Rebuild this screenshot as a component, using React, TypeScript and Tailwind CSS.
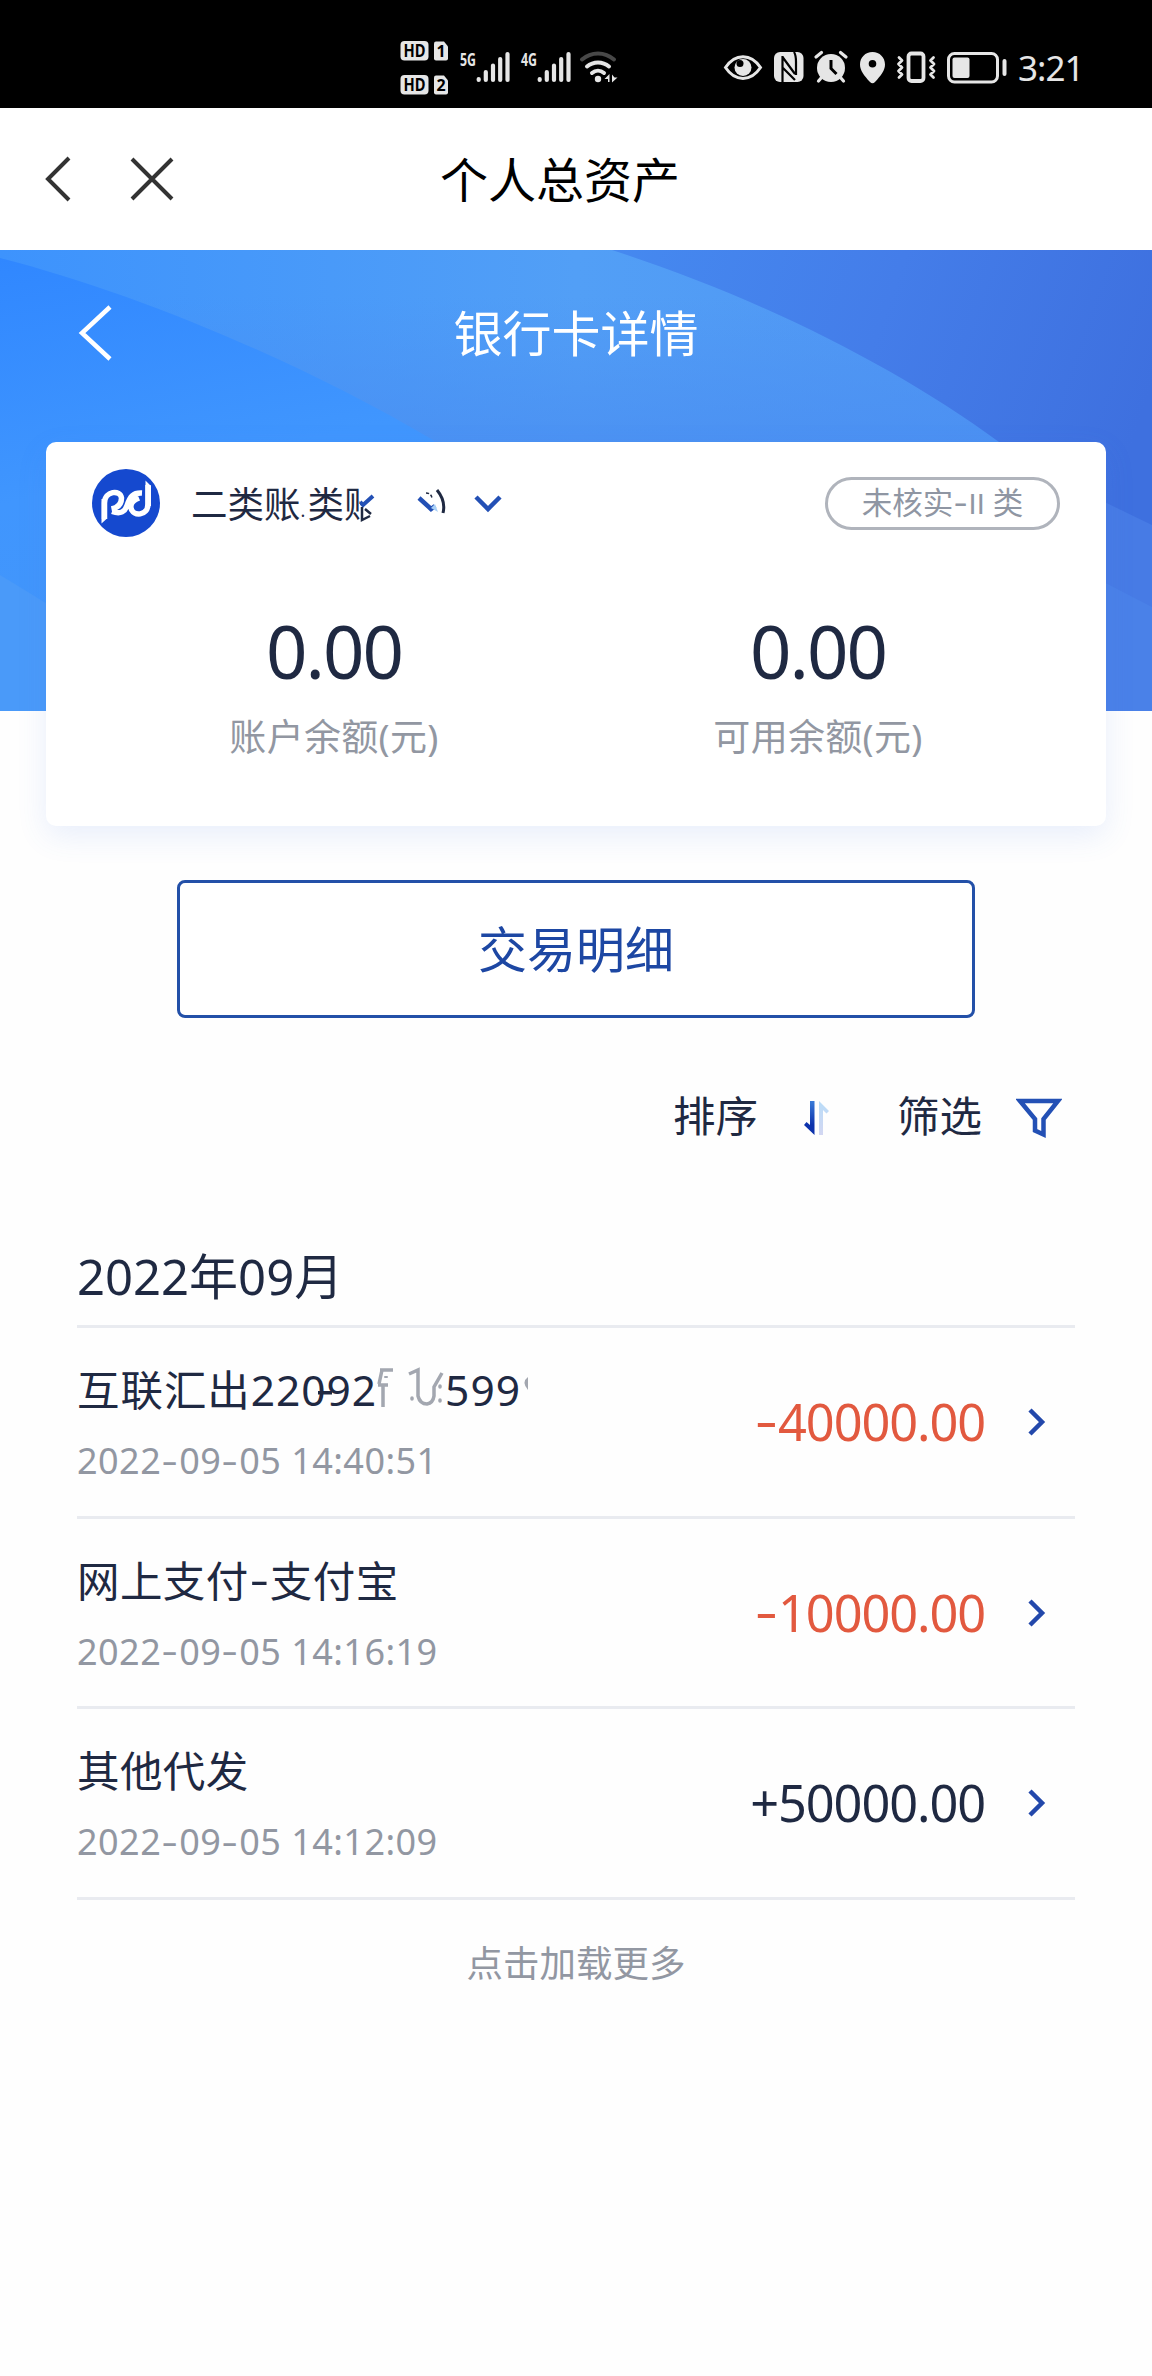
import type { ReactNode } from "react";

const records = [
  { title: "互联汇出22092", time: "2022-09-05 14:40:51", amount: "-40000.00", smudged: true },
  { title: "网上支付-支付宝", time: "2022-09-05 14:16:19", amount: "-10000.00" },
  { title: "其他代发", time: "2022-09-05 14:12:09", amount: "+50000.00" },
];

const balances = [
  { label: "账户余额(元)", value: "0.00" },
  { label: "可用余额(元)", value: "0.00" },
];

// hyphens sit wider and higher than the font's own
function Dashed({ text }: { text: string }) {
  return (
    <>
      {text.split("-").map((part, i) => (
        <span key={i}>
          {i > 0 && (
            <span className="relative -top-[0.03em] inline-block w-[0.5em] scale-x-140 text-center">-</span>
          )}
          {part}
        </span>
      ))}
    </>
  );
}

function Signal({ x, label }: { x: number; label: string }) {
  return (
    <g transform={`translate(${x} 0)`}>
      <text x="0" y="65.5" fontSize="18" fontWeight="700" textLength="16" lengthAdjust="spacingAndGlyphs" fill="#e6e6e6">
        {label}
      </text>
      <path
        d="M18.7 79v1M25.8 72v8M33 65.500v14.500M40.200 59v21M47.500 54v26"
        stroke="#e6e6e6"
        strokeWidth="4.200"
        strokeLinecap="round"
      />
    </g>
  );
}

function SimTag({ y, slot }: { y: number; slot: string }) {
  return (
    <g transform={`translate(0 ${y})`}>
      <rect x="400.500" y="0" width="28" height="19.500" rx="4" fill="#e6e6e6" />
      <text x="403.500" y="15.800" fontSize="17" fontWeight="700" textLength="22" lengthAdjust="spacingAndGlyphs" fill="#000">
        HD
      </text>
      <path d="M436 .5h8l4 5v12a2 2 0 0 1-2 2h-10a2 2 0 0 1-2-2v-15a2 2 0 0 1 2-2z" fill="#e6e6e6" />
      <text x="441" y="16" fontSize="16" fontWeight="700" textAnchor="middle" fill="#000">
        {slot}
      </text>
    </g>
  );
}

function StatusBar() {
  return (
    <div className="flex h-[108px] items-start bg-black pt-[30px] pl-[396px] text-[#e6e6e6]">
      <svg width="230" height="76" viewBox="396 30 230 76" fill="none">
        <SimTag y={41} slot="1" />
        <SimTag y={75} slot="2" />
        <Signal x={460} label="5G" />
        <Signal x={521} label="4G" />
        <g strokeLinecap="round" strokeWidth="4">
          <path d="M582 59.500a24 24 0 0 1 32 0" stroke="#484848" />
          <path d="M587 66.500a17 17 0 0 1 22 0" stroke="#e6e6e6" />
          <path d="M592 73a9.500 9.500 0 0 1 12 0" stroke="#e6e6e6" />
        </g>
        <circle cx="598" cy="79" r="3.200" fill="#e6e6e6" />
        <path d="M604.500 79l5-5v8h-1.500v-3zM612 74.500v8l5.500-5h-3z" fill="#e6e6e6" />
      </svg>
      <svg className="ml-[94px]" width="290" height="76" viewBox="720 30 290 76" fill="none">
        <path d="M725.500 67.500c9.500-14.500 25.500-14.500 35 0c-9.500 14.500-25.500 14.500-35 0z" stroke="#e6e6e6" strokeWidth="3" />
        <circle cx="743" cy="67.500" r="8.500" fill="#e6e6e6" />
        <circle cx="740" cy="63.500" r="3.500" fill="#000" />
        <rect x="774" y="52" width="29.500" height="30" rx="6" fill="#e6e6e6" />
        <path d="M782.500 83V56M782.500 57l12.500 17M794 52q2 3 2 10v13M783 68l12 12" stroke="#000" strokeWidth="2.200" />
        <circle cx="831" cy="68" r="14" fill="#e6e6e6" />
        <path d="M816 57l5.500-4.500M846 57l-5.500-4.500M822 77l-3.500 4M840 77l3.500 4" stroke="#e6e6e6" strokeWidth="3.200" strokeLinecap="round" />
        <path d="M831 60v8.500l5.500 5.500" stroke="#000" strokeWidth="3" />
        <path
          fillRule="evenodd"
          d="M872.500 52c7.200 0 12.500 5.500 12.500 12.500c0 6-4 11-10 17.500q-2.500 2.500-5 0c-6-6.500-10-11.500-10-17.500c0-7 5.300-12.500 12.500-12.500zm0 8a3.800 3.800 0 1 0 0 7.600a3.800 3.800 0 0 0 0-7.600z"
          fill="#e6e6e6"
        />
        <rect x="908.500" y="53.500" width="15" height="27.500" rx="3" stroke="#e6e6e6" strokeWidth="3.800" />
        <path
          d="M899 57.500l3 3-3.500 3.500 3.500 3.500-3.500 3.500 3.500 3.500-3 3M933.500 57.500l-3 3 3.500 3.500-3.500 3.500 3.500 3.500-3.500 3.500 3 3"
          stroke="#e6e6e6"
          strokeWidth="2.800"
          strokeLinecap="round"
          strokeLinejoin="round"
        />
        <rect x="948.500" y="53.500" width="49" height="28.500" rx="6" stroke="#e6e6e6" strokeWidth="3" />
        <rect x="952.500" y="57.500" width="17" height="20.500" rx="2" fill="#e6e6e6" />
        <rect x="1002.500" y="59" width="4" height="17" rx="2" fill="#e6e6e6" />
      </svg>
      <span className="mt-[14px] ml-[8px] text-[35px] leading-[48px] tracking-[-1px]">3:21</span>
    </div>
  );
}

function NavBar() {
  return (
    <div className="grid h-[142px] grid-cols-[432px_256px_1fr] items-center bg-white">
      <div className="flex pl-[42px] text-[#333]">
        <svg width="32" height="48" viewBox="0 0 32 48" fill="none" stroke="currentColor" strokeWidth="4">
          <path d="M27 3L6 24l21 21" />
        </svg>
        <svg className="ml-[54px]" width="48" height="48" viewBox="0 0 48 48" fill="none" stroke="currentColor" strokeWidth="4">
          <path d="M4 4l40 40M44 4L4 44" />
        </svg>
      </div>
      <h1 className="pt-[1px] text-center text-[48px] leading-none text-black">个人总资产</h1>
    </div>
  );
}

function HeroBackdrop() {
  return (
    <svg className="absolute inset-0" width="1152" height="461" viewBox="0 0 1152 461" preserveAspectRatio="none">
      <defs>
        <linearGradient id="base" x1="0" y1="0" x2="1" y2="0">
          <stop offset="0" stopColor="#3d93fd" />
          <stop offset="0.500" stopColor="#529ff6" />
          <stop offset="1" stopColor="#5092f2" />
        </linearGradient>
        <linearGradient id="lower" x1="0" y1="0" x2="0" y2="1">
          <stop offset="0.100" stopColor="#4a8ff2" stopOpacity="0" />
          <stop offset="0.420" stopColor="#4a8ff2" stopOpacity="0.800" />
        </linearGradient>
        <linearGradient id="left" x1="0" y1="0" x2="0.300" y2="1">
          <stop offset="0" stopColor="#3087ff" />
          <stop offset="0.500" stopColor="#4096fe" />
          <stop offset="1" stopColor="#4395f8" />
        </linearGradient>
        <linearGradient id="right" x1="0" y1="0" x2="1" y2="0.300">
          <stop offset="0" stopColor="#4589f0" />
          <stop offset="0.500" stopColor="#447de9" />
          <stop offset="1" stopColor="#3e70df" />
        </linearGradient>
      </defs>
      <rect width="1152" height="461" fill="url(#base)" />
      <rect width="1152" height="461" fill="url(#lower)" />
      <path d="M0 8C140 44 300 112 433 190L640 461H0z" fill="url(#left)" />
      <path d="M612 0C760 48 895 116 999 192L1106 461H1152V0z" fill="url(#right)" />
      <path d="M1090 245L1152 275V461H1090z" fill="#477be5" />
      <path d="M1090 325L1152 357V461H1090z" fill="#4a81e8" />
      <path d="M0 325Q25 340 60 362V461H0z" fill="#4a9af9" />
    </svg>
  );
}

function Logo() {
  return (
    <svg width="68" height="68" viewBox="0 0 68 68" fill="none">
      <circle cx="34" cy="34" r="34" fill="#1549cf" />
      <path
        d="M12.500 50V34c0-12 16-14 17-5c0 7-5 10-10 11M20 42.500c9 3 13 0 15-6c3-9 6-13 15-12.500M56 16v19c0 12-15 13-17 4c-1-5 3-8 8-10"
        stroke="#fff"
        strokeWidth="5.500"
      />
      <path d="M9.500 30v24.500l5.500-5V30zM53.500 11.500l5.500 5.500v20h-5.500z" fill="#fff" />
    </svg>
  );
}

function Chevron({ className }: { className?: string }) {
  return (
    <svg className={className} width="28" height="20" viewBox="0 0 28 20" fill="none" stroke="#2350b5" strokeWidth="4.500">
      <path d="M2 3l12 12L26 3" />
    </svg>
  );
}

function AccountName() {
  return (
    <div className="ml-[31px] flex items-center pt-[2px] text-[36.500px] leading-[48px] whitespace-nowrap text-[#1f2942]">
      <span>二类账</span>
      <span className="w-[7px] pt-[12px] text-[18px]">.</span>
      <span>类账</span>
      <svg className="relative -ml-[21px]" width="23" height="44" viewBox="0 0 23 44" fill="none">
        <path d="M0 0h23v44H0z" fill="#fff" />
        <path d="M0 20l3 3L13 14" stroke="#2350b5" strokeWidth="4" />
        <path d="M2 25v13l8-4M5 27l6 5" stroke="#1f2942" strokeWidth="2.500" />
      </svg>
      <svg className="ml-[34px]" width="30" height="32" viewBox="0 0 30 32" fill="none">
        <path d="M2 10l12 11 4-3" stroke="#2350b5" strokeWidth="4.500" />
        <path d="M14 20l4-4 3 8z" fill="#a9d0f7" />
        <path d="M9 5q5 0 6 5" stroke="#1f2942" strokeWidth="1.500" strokeDasharray="3 2" />
        <path d="M20 2q9 11 6 23" stroke="#1f2942" strokeWidth="3" />
      </svg>
      <Chevron className="ml-[27px]" />
    </div>
  );
}

function CardPanel() {
  return (
    <div className="mx-[46px] mt-[49px] h-[384px] rounded-[10px] bg-white px-[46px] pt-[27px] shadow-[0_10px_30px_rgba(70,120,230,0.12)]">
      <div className="flex h-[68px] items-center">
        <Logo />
        <AccountName />
        <div className="ml-auto flex h-[53px] w-[235px] items-center justify-center rounded-full border-3 border-[#b0b4bc] text-[30.500px] whitespace-nowrap text-[#8f96a3]">
          <span>
            <Dashed text="未核实-" />
            <span className="font-['Liberation_Sans'] text-[29px]">II</span> 类
          </span>
        </div>
      </div>
      <div className="mt-[66px] grid grid-cols-2 text-center">
        {balances.map((b) => (
          <div key={b.label}>
            <p className="text-[72.500px] leading-[96px] tracking-[-2px] text-[#1f2942]">{b.value}</p>
            <p className="mt-[14px] text-[37px] leading-[48px] tracking-[0.300px] text-[#9297a2]">{b.label}</p>
          </div>
        ))}
      </div>
    </div>
  );
}

function Toolbar() {
  return (
    <div className="mt-[66px] flex h-[64px] items-center pl-[673px] text-[42.500px] text-[#1f2942]">
      <span>排序</span>
      <svg className="mt-[3px] ml-[45px]" width="28" height="36" viewBox="0 0 28 36" fill="none">
        <defs>
          <linearGradient id="down" x1="0" y1="0" x2="0" y2="1">
            <stop offset="0" stopColor="#3a7bd8" />
            <stop offset="0.700" stopColor="#0d32ac" />
          </linearGradient>
          <linearGradient id="up" x1="0" y1="0" x2="0" y2="1">
            <stop offset="0" stopColor="#b9dcf8" />
            <stop offset="1" stopColor="#d3d7f2" />
          </linearGradient>
        </defs>
        <path d="M7 1h4.500v34L1 25l2.500-3L7 25z" fill="url(#down)" />
        <path d="M16 1l10 10-2.500 2.500L20 10v25h-4z" fill="url(#up)" />
      </svg>
      <span className="ml-[66px]">筛选</span>
      <svg className="mt-[3px] ml-[34px]" width="46" height="42" viewBox="0 0 46 42" fill="none">
        <path d="M4 4h38L27.500 22v15.500L19 33.500V22z" stroke="#2350b5" strokeWidth="4.500" />
      </svg>
    </div>
  );
}

// leftovers of the masked card number
function MaskedTail() {
  return (
    <span className="relative flex">
      <svg className="absolute top-[29px] -left-[59px]" width="14" height="4" viewBox="0 0 14 4">
        <path d="M0 0h14v3.500H0z" fill="#1f2942" />
      </svg>
      <svg width="68" height="56" viewBox="0 0 68 56" fill="none" stroke="#a3a7b0" strokeWidth="3.500">
        <path d="M3 8h13M5 8L2 22M9 16v-2M1 23h10M6 24v21" />
        <path d="M32 12l9-4v26q2 8 9 8q6-1 7-8v-9l8-14" />
        <path d="M35 36v1M63 24v1M63 38v1" strokeLinecap="round" />
      </svg>
      <span className="tracking-[1px] text-[#1f2942]">599</span>
      <svg width="8" height="56" viewBox="0 0 8 56" fill="none">
        <path d="M7 15q-7 5 0 13z" fill="#a3a7b0" />
      </svg>
    </span>
  );
}

function Row({ title, time, amount, children }: { title: string; time: string; amount: string; children?: ReactNode }) {
  return (
    <li className="flex h-[190.700px] items-center border-b-3 border-[#e9ebf0]">
      <div>
        <div className="flex h-[56px] items-center text-[42.500px] leading-[56px] whitespace-nowrap text-[#1f2942]">
          <span className={children ? "tracking-[0.950px]" : "tracking-[0.400px]"}>
            <Dashed text={title} />
          </span>
          {children}
        </div>
        <p className="relative top-[3px] mt-[16px] text-[36px] leading-[48px] tracking-[0.450px] whitespace-nowrap text-[#9297a2]">
          <Dashed text={time} />
        </p>
      </div>
      <span className={`ml-auto text-[50.500px] leading-[56px] tracking-[-1.100px] ${amount.startsWith("-") ? "text-[#e2593f]" : "text-[#1f2942]"}`}>
        <Dashed text={amount} />
      </span>
      <svg className="mr-[28px] ml-[42px]" width="20" height="30" viewBox="0 0 20 30" fill="none">
        <path d="M3 3l12 12L3 27" stroke="#2348ab" strokeWidth="4.500" />
      </svg>
    </li>
  );
}

export default function App() {
  return (
    <div className="min-h-[2376px] w-[1152px] bg-[#fefefe] font-['Noto_Sans','Noto_Sans_CJK_SC',sans-serif]">
      <StatusBar />
      <NavBar />
      <div className="relative h-[461px]">
        <HeroBackdrop />
        <div className="relative">
          <div className="grid h-[143px] grid-cols-[200px_1fr_200px] items-center pt-[23px]">
            <svg className="ml-[76px]" width="40" height="60" viewBox="0 0 40 60" fill="none">
              <path d="M34 4L6 30l28 26" stroke="#fff" strokeWidth="4.500" />
            </svg>
            <h2 className="text-center text-[49px] leading-none text-white">银行卡详情</h2>
          </div>
          <CardPanel />
        </div>
      </div>
      <button className="mt-[169px] ml-[177px] block h-[138px] w-[798px] rounded-[8px] border-3 border-[#2350a8] bg-white pt-[2px] text-[49px] text-[#1d47a3]">
        交易明细
      </button>
      <Toolbar />
      <section className="mx-[77px] mt-[96px]">
        <h3 className="h-[84px] border-b-3 border-[#e9ebf0] text-[49px] leading-[65px] text-[#1f2942]">2022年09月</h3>
        <ul>
          {records.map((r) => (
            <Row key={r.time} title={r.title} time={r.time} amount={r.amount}>
              {r.smudged && <MaskedTail />}
            </Row>
          ))}
        </ul>
      </section>
      <p className="mt-[39px] text-center text-[36.500px] leading-[48px] text-[#9297a2]">点击加载更多</p>
    </div>
  );
}
